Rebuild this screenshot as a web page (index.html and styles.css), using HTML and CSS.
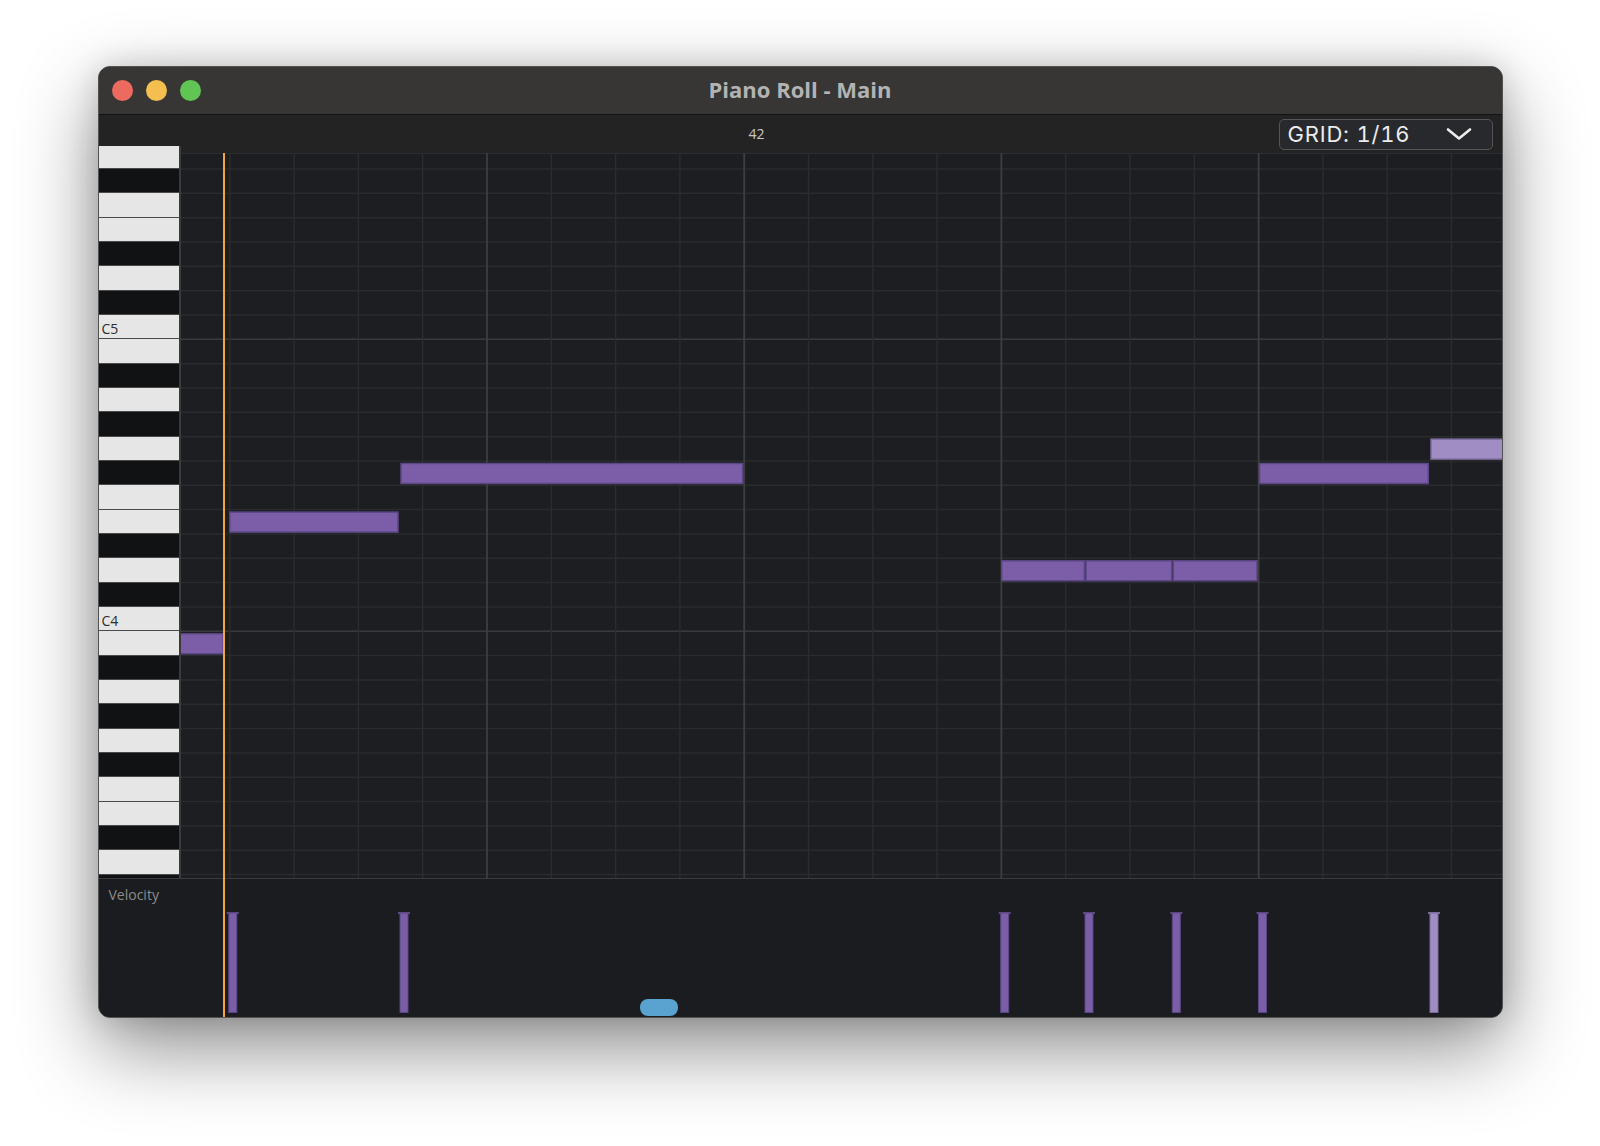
FILE: index.html
```html
<!DOCTYPE html>
<html>
  <head>
    <title>Piano Roll - Main</title>
    <link rel="stylesheet" href="styles.css">
  </head>
  <body>
    <div class="window">
      <div class="titlebar">
        <div class="lights">
          <span class="light red"></span>
          <span class="light yellow"></span>
          <span class="light green"></span>
        </div>
        <div class="title">Piano Roll - Main</div>
        <div></div>
      </div>

      <div class="ruler">
        <span class="bar-number" style="left: 650px">42</span>
        <div class="grid-select">
          <span>GRID: 1/16</span>
          <svg class="chevron" width="26" height="14" viewBox="0 0 26 14">
            <polyline points="2,2.5 13,11.5 24,2.5" />
          </svg>
        </div>
      </div>

      <div class="editor">
        <div class="roll">
          <div class="keys">
            <div class="key white first"></div>
            <div class="key black"></div>
            <div class="key white"></div>
            <div class="key white"></div>
            <div class="key black"></div>
            <div class="key white"></div>
            <div class="key black"></div>
            <div class="key white"><span class="key-label">C5</span></div>
            <div class="key white"></div>
            <div class="key black"></div>
            <div class="key white"></div>
            <div class="key black"></div>
            <div class="key white"></div>
            <div class="key black"></div>
            <div class="key white"></div>
            <div class="key white"></div>
            <div class="key black"></div>
            <div class="key white"></div>
            <div class="key black"></div>
            <div class="key white"><span class="key-label">C4</span></div>
            <div class="key white"></div>
            <div class="key black"></div>
            <div class="key white"></div>
            <div class="key black"></div>
            <div class="key white"></div>
            <div class="key black"></div>
            <div class="key white"></div>
            <div class="key white"></div>
            <div class="key black"></div>
            <div class="key white"></div>
            <div class="key black"></div>
          </div>

          <svg class="grid" viewBox="0 0 1321 725" preserveAspectRatio="none">
            <!-- rows -->
            <line class="top-line" x1="0" x2="1321" y1="0.5" y2="0.5" />
            <g class="row-line">
              <line x1="0" x2="1321" y1="16" y2="16" />
              <line x1="0" x2="1321" y1="40.33" y2="40.33" />
              <line x1="0" x2="1321" y1="64.66" y2="64.66" />
              <line x1="0" x2="1321" y1="88.99" y2="88.99" />
              <line x1="0" x2="1321" y1="113.32" y2="113.32" />
              <line x1="0" x2="1321" y1="137.65" y2="137.65" />
              <line x1="0" x2="1321" y1="161.98" y2="161.98" />
              <line x1="0" x2="1321" y1="210.64" y2="210.64" />
              <line x1="0" x2="1321" y1="234.97" y2="234.97" />
              <line x1="0" x2="1321" y1="259.3" y2="259.3" />
              <line x1="0" x2="1321" y1="283.63" y2="283.63" />
              <line x1="0" x2="1321" y1="307.96" y2="307.96" />
              <line x1="0" x2="1321" y1="332.29" y2="332.29" />
              <line x1="0" x2="1321" y1="356.62" y2="356.62" />
              <line x1="0" x2="1321" y1="380.95" y2="380.95" />
              <line x1="0" x2="1321" y1="405.28" y2="405.28" />
              <line x1="0" x2="1321" y1="429.61" y2="429.61" />
              <line x1="0" x2="1321" y1="453.94" y2="453.94" />
              <line x1="0" x2="1321" y1="502.6" y2="502.6" />
              <line x1="0" x2="1321" y1="526.93" y2="526.93" />
              <line x1="0" x2="1321" y1="551.26" y2="551.26" />
              <line x1="0" x2="1321" y1="575.59" y2="575.59" />
              <line x1="0" x2="1321" y1="599.92" y2="599.92" />
              <line x1="0" x2="1321" y1="624.25" y2="624.25" />
              <line x1="0" x2="1321" y1="648.58" y2="648.58" />
              <line x1="0" x2="1321" y1="672.91" y2="672.91" />
              <line x1="0" x2="1321" y1="697.24" y2="697.24" />
              <line x1="0" x2="1321" y1="721.57" y2="721.57" />
            </g>
            <g class="octave-line">
              <line x1="0" x2="1321" y1="186.31" y2="186.31" />
              <line x1="0" x2="1321" y1="478.27" y2="478.27" />
            </g>

            <!-- beats and bars -->
            <g class="beat-line">
              <line x1="48.8" x2="48.8" y1="0" y2="725" />
              <line x1="113.1" x2="113.1" y1="0" y2="725" />
              <line x1="177.4" x2="177.4" y1="0" y2="725" />
              <line x1="241.7" x2="241.7" y1="0" y2="725" />
              <line x1="370.3" x2="370.3" y1="0" y2="725" />
              <line x1="434.6" x2="434.6" y1="0" y2="725" />
              <line x1="498.9" x2="498.9" y1="0" y2="725" />
              <line x1="627.5" x2="627.5" y1="0" y2="725" />
              <line x1="691.8" x2="691.8" y1="0" y2="725" />
              <line x1="756.1" x2="756.1" y1="0" y2="725" />
              <line x1="884.7" x2="884.7" y1="0" y2="725" />
              <line x1="949" x2="949" y1="0" y2="725" />
              <line x1="1013.3" x2="1013.3" y1="0" y2="725" />
              <line x1="1141.9" x2="1141.9" y1="0" y2="725" />
              <line x1="1206.2" x2="1206.2" y1="0" y2="725" />
              <line x1="1270.5" x2="1270.5" y1="0" y2="725" />
            </g>
            <g class="bar-line">
              <line x1="306" x2="306" y1="0" y2="725" />
              <line x1="563.2" x2="563.2" y1="0" y2="725" />
              <line x1="820.4" x2="820.4" y1="0" y2="725" />
              <line x1="1077.6" x2="1077.6" y1="0" y2="725" />
            </g>

            <!-- notes -->
            <g class="note">
              <rect x="-5" y="480.8" width="47.2" height="20" />
              <rect x="48.8" y="359.1" width="168.2" height="20" />
              <rect x="220" y="310.5" width="341.7" height="20" />
              <rect x="820.7" y="407.8" width="82.6" height="20" />
              <rect x="905" y="407.8" width="85.7" height="20" />
              <rect x="992.3" y="407.8" width="83.7" height="20" />
              <rect x="1078.5" y="310.5" width="168.8" height="20" />
            </g>
            <rect class="note-selected" x="1250" y="286.1" width="80" height="20" />
          </svg>
        </div>

        <div class="velocity">
          <span class="lane-label">Velocity</span>
          <svg class="velocity-bars" viewBox="0 0 1403 136" preserveAspectRatio="none">
            <g class="vel">
              <rect class="cap" x="127.8" y="32.5" width="12" height="2" />
              <rect x="129.8" y="33.5" width="8" height="98" />
              <rect class="cap" x="299" y="32.5" width="12" height="2" />
              <rect x="301" y="33.5" width="8" height="98" />
              <rect class="cap" x="899.7" y="32.5" width="12" height="2" />
              <rect x="901.7" y="33.5" width="8" height="98" />
              <rect class="cap" x="984" y="32.5" width="12" height="2" />
              <rect x="986" y="33.5" width="8" height="98" />
              <rect class="cap" x="1071.3" y="32.5" width="12" height="2" />
              <rect x="1073.3" y="33.5" width="8" height="98" />
              <rect class="cap" x="1157.5" y="32.5" width="12" height="2" />
              <rect x="1159.5" y="33.5" width="8" height="98" />
            </g>
            <g class="vel-selected">
              <rect class="cap" x="1329" y="32.5" width="12" height="2" />
              <rect x="1331" y="33.5" width="8" height="98" />
            </g>
          </svg>
          <div class="scroll-thumb"></div>
        </div>

        <div class="playhead"></div>
      </div>
    </div>
  </body>
</html>
```

FILE: styles.css
```css
html {
  height: 100%;
}

body {
  margin: 0;
  min-height: 100%;
  padding-top: 66px;
  box-sizing: border-box;
  background-color: #ffffff;
  font-family: "Open Sans", "Noto Sans", sans-serif;
}

.window {
  width: 1405px;
  height: 952px;
  margin: 0 auto;
  box-sizing: border-box;
  display: flex;
  flex-direction: column;
  border: 1px solid #525252;
  border-radius: 12px;
  overflow: hidden;
  background-color: #1c1d20;
  box-shadow: 0 30px 80px rgba(0, 0, 0, 0.45), 0 0 30px rgba(0, 0, 0, 0.15);
}

/* title bar */

.titlebar {
  flex: none;
  height: 48px;
  padding-bottom: 3px;
  box-sizing: border-box;
  display: grid;
  grid-template-columns: 1fr auto 1fr;
  align-items: center;
  background-color: #383635;
  border-bottom: 1px solid #131313;
}

.lights {
  display: flex;
  gap: 13px;
  padding-left: 13px;
  margin-top: 3px;
}

.light {
  width: 21px;
  height: 21px;
  border-radius: 50%;
}

.red {
  background-color: #ec6a5e;
}

.yellow {
  background-color: #f4bf4f;
}

.green {
  background-color: #61c554;
}

.title {
  font-size: 22px;
  font-weight: 700;
  color: #b3b3b3;
}

/* ruler */

.ruler {
  flex: none;
  height: 38px;
  position: relative;
  display: flex;
  align-items: center;
  justify-content: flex-end;
  padding-right: 9px;
  box-sizing: border-box;
  background-color: #232323;
}

.bar-number {
  position: absolute;
  top: 9px;
  font-size: 14px;
  color: #c8c8c8;
}

.grid-select {
  width: 214px;
  height: 31px;
  box-sizing: border-box;
  display: flex;
  align-items: center;
  justify-content: space-between;
  padding: 0 20px 0 8px;
  border: 1.5px solid #55565a;
  border-radius: 5px;
  background-color: #28292c;
  font-family: Inter, "Open Sans", sans-serif;
  font-size: 22px;
  font-variant-numeric: tabular-nums;
  letter-spacing: 0.8px;
  color: #ececec;
}

.chevron polyline {
  fill: none;
  stroke: #ececec;
  stroke-width: 2.6;
  stroke-linecap: round;
  stroke-linejoin: round;
}

/* editor */

.editor {
  flex: 1;
  position: relative;
  display: flex;
  flex-direction: column;
}

.roll {
  flex: none;
  height: 725px;
  display: flex;
}

.keys {
  flex: none;
  width: 82px;
  height: 732px;
  margin-top: -7px;
  box-sizing: border-box;
  display: flex;
  flex-direction: column;
  overflow: hidden;
  border-right: 2px solid #3a3a3c;
  position: relative;
  z-index: 1;
}

.key {
  flex: none;
  height: 24.33px;
  box-sizing: border-box;
  border-bottom: 1px solid #4a4a4a;
}

.key.first {
  height: 23px;
}

.white {
  background-color: #e6e6e6;
}

.black {
  background-color: #111214;
}

.key-label {
  display: block;
  padding: 4px 0 0 3px;
  font-size: 14px;
  line-height: 19px;
  color: #2d2d2d;
}

.grid {
  flex: 1;
  display: block;
  height: 725px;
  background-color: #1d1e21;
}

.top-line {
  stroke: #2c2d30;
  stroke-width: 1;
}

.row-line {
  stroke: #2a2b2e;
  stroke-width: 1.5;
}

.octave-line {
  stroke: #393a3d;
  stroke-width: 1.5;
}

.beat-line {
  stroke: #2b2c2f;
  stroke-width: 1.4;
}

.bar-line {
  stroke: #3d3e41;
  stroke-width: 1.8;
}

.note rect {
  fill: #7b5ea7;
  stroke: #5b4785;
  stroke-width: 1.5;
}

.note-selected {
  fill: #a08dc3;
  stroke: #7c6c9c;
  stroke-width: 1.5;
}

/* velocity lane */

.velocity {
  flex: 1;
  position: relative;
  border-top: 1.5px solid #3a3b3e;
  background-color: #1b1c1f;
}

.lane-label {
  display: block;
  padding: 6px 10px;
  font-size: 14px;
  color: #8b8b8b;
}

.velocity-bars {
  position: absolute;
  top: 0;
  left: 0;
  width: 100%;
  height: 100%;
}

.vel rect {
  fill: #7b5ea7;
  stroke: #5b4785;
  stroke-width: 1;
}

.vel-selected rect {
  fill: #a08dc3;
  stroke: #7c6c9c;
  stroke-width: 1;
}

.velocity-bars .cap {
  fill: #5d4a80;
  stroke: none;
}

.vel-selected .cap {
  fill: #7c6c9c;
}

.scroll-thumb {
  position: absolute;
  left: 541px;
  bottom: 1px;
  width: 38px;
  height: 17px;
  border-radius: 8px;
  background-color: #5aa2cf;
}

.playhead {
  position: absolute;
  top: 0;
  bottom: 0;
  left: 124px;
  width: 2px;
  background-color: #f3a63a;
  z-index: 2;
}
```
